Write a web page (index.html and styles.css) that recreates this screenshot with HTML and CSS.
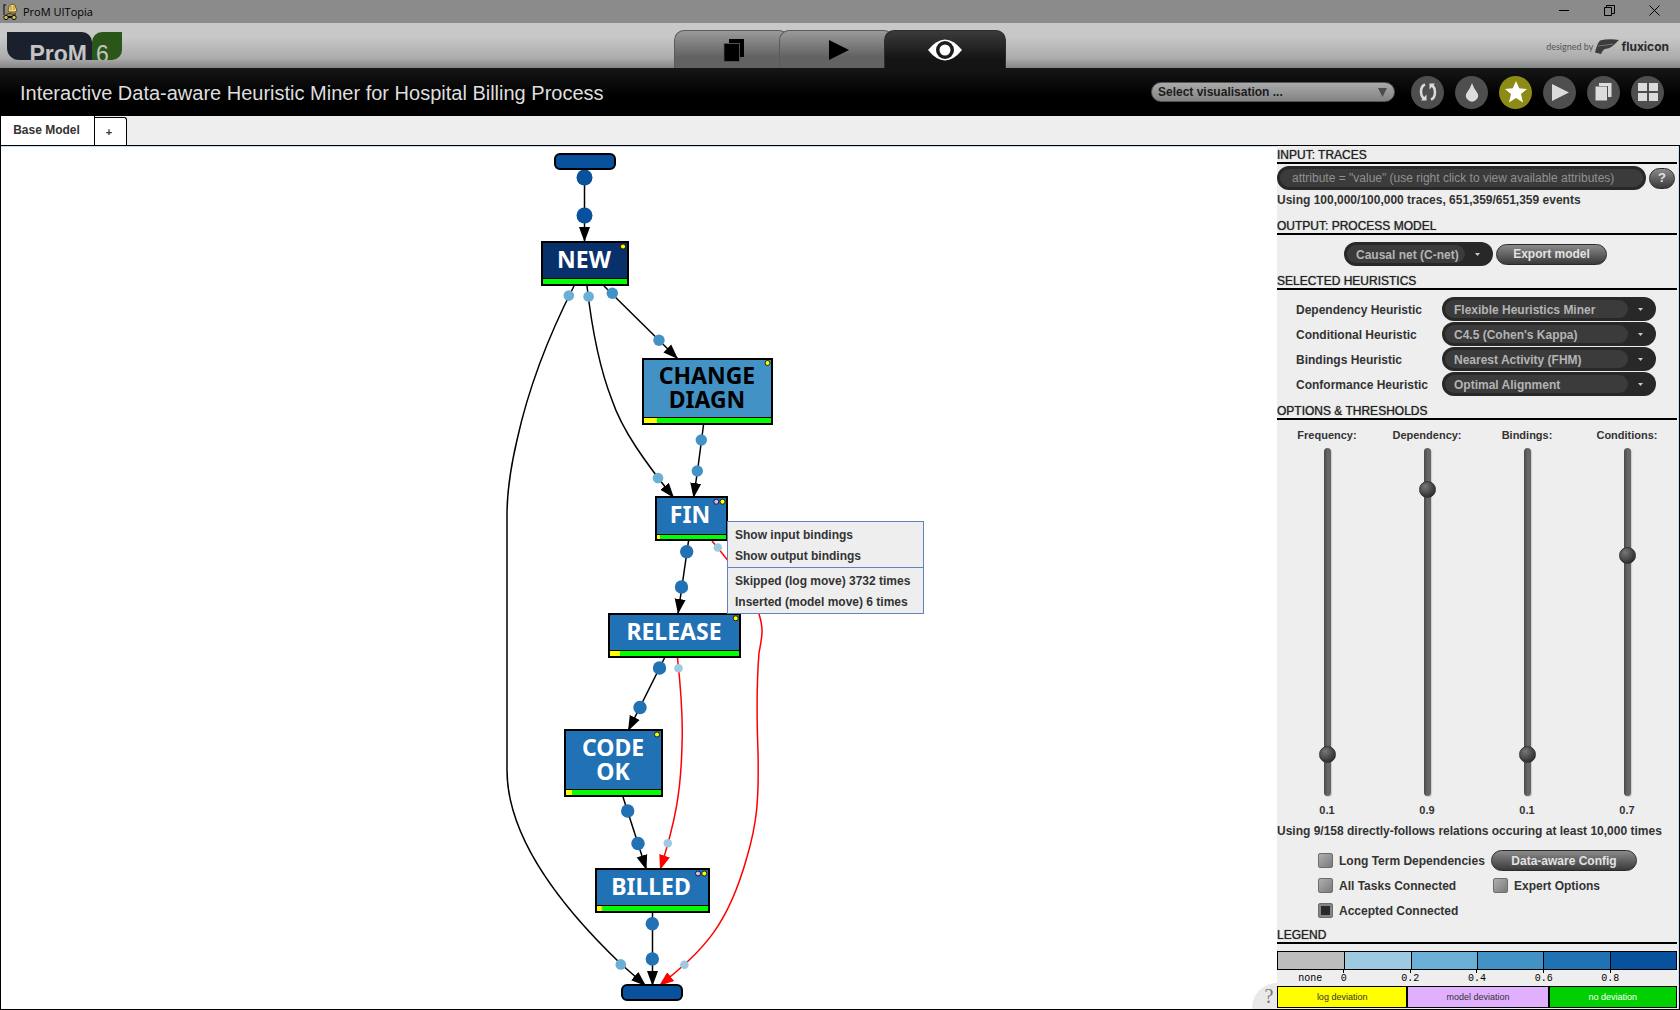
FILE: index.html
```html
<!DOCTYPE html>
<html lang="en">
<head>
<meta charset="utf-8">
<title>ProM UITopia</title>
<link rel="stylesheet" href="styles.css">
</head>
<body>
<div class="window">
  <header class="titlebar">
    <svg class="app-icon" width="16" height="18" viewBox="0 0 16 18" aria-hidden="true">
      <path d="M2 1v11M2 2h2M4 11h10" stroke="#3a3320" stroke-width="1.500" fill="none"/>
      <path d="M6 8l1-5 3-2 3 1 2 6-2 1H8z" fill="#f2d777" stroke="#6b5a20"/>
      <path d="M9 3v4M12 3v4M3 9l4 3 6-2" stroke="#a8842a" fill="none"/>
      <circle cx="4" cy="14.500" r="2.200" fill="#c9bf4c" stroke="#111"/>
      <circle cx="12" cy="14.500" r="2.200" fill="#c9bf4c" stroke="#111"/>
      <path d="M6 14h4" stroke="#111" stroke-width="2"/>
    </svg>
    <span class="app-name">ProM UITopia</span>
    <div class="window-controls">
      <button type="button" aria-label="Minimize"><svg width="11" height="11" viewBox="0 0 11 11"><path d="M0 5.500h10" stroke="#000"/></svg></button>
      <button type="button" aria-label="Restore"><svg width="11" height="11" viewBox="0 0 11 11"><path d="M.5 2.500h7v8h-7zM2.500 2.500v-2h8v8h-3" fill="none" stroke="#000"/></svg></button>
      <button type="button" aria-label="Close"><svg width="11" height="11" viewBox="0 0 11 11"><path d="M.5.5l10 10M10.500.5l-10 10" stroke="#000"/></svg></button>
    </div>
  </header>

  <nav class="toolbar">
    <div class="logo"><span class="logo-name">ProM</span><span class="logo-version">6</span></div>
    <div class="views">
      <button type="button" class="view" aria-label="Workspace">
        <svg width="22" height="24" viewBox="0 0 22 24"><path d="M6 1h15v18h-4V5H6z" fill="#000"/><path d="M1 5.500h15.500V23.500H1z" fill="#000" stroke="#555" stroke-width=".8"/></svg>
      </button>
      <button type="button" class="view" aria-label="Actions">
        <svg width="20" height="20" viewBox="0 0 20 20"><path d="M0 0l20 10L0 20z" fill="#000"/></svg>
      </button>
      <button type="button" class="view view-active" aria-label="Views">
        <svg width="34" height="22" viewBox="0 0 34 22"><path d="M0 11Q17-10 34 11Q17 32 0 11z" fill="#fff"/><circle cx="17" cy="11" r="9" fill="#1c1c1c"/><circle cx="17" cy="11" r="5.500" fill="#fff"/></svg>
      </button>
    </div>
    <div class="credit">
      <span class="credit-by">designed by</span>
      <svg width="24" height="16" viewBox="0 0 24 16" aria-hidden="true"><path d="M5 1.500Q14-.5 24 1Q20 5 17 7.500Q14 9.500 10 10Q8 10.500 6 15L0 13.500Q2 5 5 1.500z" fill="#3c3c3c"/><path d="M3 7Q12 6 18 5" stroke="#777" fill="none"/></svg>
      <span class="credit-name">fluxicon</span>
    </div>
  </nav>

  <div class="view-head">
    <h1>Interactive Data-aware Heuristic Miner for Hospital Billing Process</h1>
    <span class="vis-picker">
      <select aria-label="Select visualisation"><option>Select visualisation ...</option></select>
      <svg width="9" height="9" viewBox="0 0 9 9" aria-hidden="true"><path d="M0 0h9L4.500 9z" fill="#4c4c4c"/></svg>
    </span>
    <div class="actions">
      <button type="button" aria-label="Refresh"><svg width="18" height="20" viewBox="0 0 18 20"><path d="M6 2.500Q2 4 2 10q0 4 2.500 6.500M12 17.500Q16 16 16 10q0-4-2.500-6.500" fill="none" stroke="#dcdcdc" stroke-width="2.500"/><path d="M2 18.500h5.500v-6zM16 1.500h-5.500v6z" fill="#dcdcdc"/></svg></button>
      <button type="button" aria-label="Filter"><svg width="14" height="20" viewBox="0 0 14 20"><path d="M7 1Q8.500 6 12 10.500A6 5.800 0 1 1 2 10.500Q5.500 6 7 1z" fill="#dcdcdc"/></svg></button>
      <button type="button" class="favourite" aria-label="Favourite"><svg width="22" height="22" viewBox="0 0 22 22"><path d="M11 0l3.200 7.300 7.800.7-6 5 2 8.500-7-4.500-7 4.500 2-8.500-6-5 7.800-.7z" fill="#fff"/></svg></button>
      <button type="button" aria-label="Run"><svg width="18" height="17" viewBox="0 0 18 17"><path d="M1 0l17 8.500L1 17z" fill="#dcdcdc"/></svg></button>
      <button type="button" aria-label="Copy"><svg width="17" height="20" viewBox="0 0 17 20"><path d="M4 1h12.500v14H13V4H4z" fill="#dcdcdc"/><path d="M.5 4.500H12v14H.5z" fill="#dcdcdc"/></svg></button>
      <button type="button" aria-label="Overview"><svg width="20" height="20" viewBox="0 0 20 20"><path d="M0 1h9v8H0zM11 1h9v8h-9zM0 11h9v8H0zM11 11h9v8h-9z" fill="#dcdcdc"/></svg></button>
    </div>
  </div>

  <div class="tabs" role="tablist">
    <button type="button" role="tab" class="tab tab-active" aria-selected="true">Base Model</button>
    <button type="button" role="tab" class="tab tab-add" aria-selected="false">+</button>
  </div>

  <main class="workspace">
    <section class="canvas">
      <div class="diagram">
        <svg class="net" width="278" height="860" viewBox="500 147 278 860" role="img" aria-label="Causal net">
          <defs>
            <marker id="arrow" markerUnits="userSpaceOnUse" markerWidth="15" markerHeight="12" refX="15" refY="6" orient="auto"><path d="M0 0.500l15 5.500-15 5.500z" fill="#000"/></marker>
            <marker id="arrow-red" markerUnits="userSpaceOnUse" markerWidth="15" markerHeight="12" refX="15" refY="6" orient="auto"><path d="M0 0.500l15 5.500-15 5.500z" fill="#f00"/></marker>
          </defs>
          <g class="edge">
            <path d="M584.500 169V242"/>
            <path d="M604 286L678 359"/>
            <path d="M587 286C592 330 601 372 612 400C622 430 645 462 674 498"/>
            <path d="M574 286C549 335 528 390 517 440C510 470 507 490 507 515V770C507 845 575 920 621 964L646 986"/>
            <path d="M703.500 425L697.500 471L693.500 498"/>
            <path d="M688.500 541L678 614"/>
            <path d="M664.500 658L628 731"/>
            <path d="M623 797L646.500 870"/>
            <path d="M652.500 913V986"/>
          </g>
          <g class="edge edge-red">
            <path d="M712 541C735 568 756 598 759 614C764 630 762 636 759 653C756 690 757 725 758 752C759 800 757 823 747 857C728 925 705 949 659 986"/>
            <path d="M677.500 658C681 690 683 720 682 745C681 790 676 820 660 870"/>
          </g>
          <g fill="#08519c"><circle cx="584.500" cy="177.500" r="8"/><circle cx="584.500" cy="215.500" r="8"/></g>
          <g fill="#2171b5">
            <circle cx="686.700" cy="551.700" r="6.700"/><circle cx="681.500" cy="587" r="6.700"/>
            <circle cx="659.500" cy="668" r="6.700"/><circle cx="640" cy="707.500" r="6.700"/>
            <circle cx="627.700" cy="811" r="6.700"/><circle cx="638" cy="843.500" r="6.700"/>
            <circle cx="652.300" cy="923.700" r="6.700"/><circle cx="652.300" cy="959" r="6.700"/>
          </g>
          <g fill="#4292c6">
            <circle cx="612.300" cy="293.300" r="5.700"/><circle cx="659" cy="340.300" r="5.700"/>
            <circle cx="701.300" cy="440" r="5.700"/><circle cx="697.300" cy="471" r="5.700"/>
          </g>
          <g fill="#6baed6">
            <circle cx="568.800" cy="295.600" r="5.300"/><circle cx="588.600" cy="296.500" r="5.300"/>
            <circle cx="658" cy="478" r="5.300"/><circle cx="620.800" cy="964.400" r="5.300"/>
          </g>
          <g fill="#9ecae1">
            <circle cx="717.800" cy="547.500" r="4.300"/><circle cx="678.500" cy="668.200" r="4.300"/>
            <circle cx="667.800" cy="843.300" r="4.300"/><circle cx="684.400" cy="964.800" r="4.300"/>
          </g>

          <g class="terminal">
            <rect x="555" y="154" width="60" height="15" rx="5"/>
            <rect x="622" y="985" width="60" height="15" rx="5"/>
          </g>

          <g class="node">
            <rect class="body start" x="542" y="242" width="86" height="43"/>
            <path class="ok" d="M543 279h84v5h-84z"/><path class="rule" d="M541 278.500h88"/>
            <circle class="log" cx="623" cy="246.500" r="2.500"/>
            <text x="584" y="268">NEW</text>
          </g>
          <g class="node">
            <rect class="body mid" x="643" y="359" width="129" height="65"/>
            <path class="ok" d="M644 418h127v5H644z"/><path class="dev" d="M644 418h13v5h-13z"/><path class="rule" d="M642 417.500h131"/>
            <circle class="log" cx="767.500" cy="363" r="2.500"/>
            <text class="dark" x="707" y="384">CHANGE</text><text class="dark" x="707" y="408">DIAGN</text>
          </g>
          <g class="node">
            <rect class="body" x="656" y="497" width="71" height="43"/>
            <path class="ok" d="M657 535h69v4h-69z"/><path class="dev" d="M657 535h3v4h-3z"/><path class="rule" d="M655 534.500h73"/>
            <circle class="model" cx="716.300" cy="501.700" r="2.500"/><circle class="log" cx="722.500" cy="501.700" r="2.500"/>
            <text x="690" y="523">FIN</text>
          </g>
          <g class="node">
            <rect class="body" x="609" y="614" width="131" height="43"/>
            <path class="ok" d="M610 651h129v5H610z"/><path class="dev" d="M610 651h10v5h-10z"/><path class="rule" d="M608 650.500h133"/>
            <circle class="log" cx="735.700" cy="618.300" r="2.500"/>
            <text x="674" y="640">RELEASE</text>
          </g>
          <g class="node">
            <rect class="body" x="565" y="730" width="97" height="66"/>
            <path class="ok" d="M566 790h95v5h-95z"/><path class="dev" d="M566 790h6v5h-6z"/><path class="rule" d="M564 789.500h99"/>
            <circle class="log" cx="657" cy="734.500" r="2.500"/>
            <text x="613" y="756">CODE</text><text x="613" y="780">OK</text>
          </g>
          <g class="node">
            <rect class="body" x="596" y="869" width="113" height="43"/>
            <path class="ok" d="M597 906h111v5H597z"/><path class="dev" d="M597 906h5v5h-5z"/><path d="M601.500 906h1v5h-1z" fill="#a9a9a9"/><path class="rule" d="M595 905.500h115"/>
            <circle class="model" cx="698" cy="873.500" r="2.500"/><circle class="log" cx="704.300" cy="873.500" r="2.500"/>
            <text x="651" y="895">BILLED</text>
          </g>
        </svg>
        <div class="menu" role="menu">
          <button type="button" role="menuitem">Show input bindings</button>
          <button type="button" role="menuitem">Show output bindings</button>
          <hr>
          <button type="button" role="menuitem">Skipped (log move) 3732 times</button>
          <button type="button" role="menuitem">Inserted (model move) 6 times</button>
        </div>
      </div>
      <button type="button" class="help-corner" aria-label="Help">?</button>
    </section>

    <aside class="panel">
      <h2>INPUT: TRACES</h2>
      <div class="filter">
        <input type="text" aria-label="Trace filter" placeholder='attribute = "value" (use right click to view available attributes)'>
        <button type="button" class="pill pill-help" aria-label="Filter help">?</button>
      </div>
      <p class="stat">Using 100,000/100,000 traces, 651,359/651,359 events</p>

      <h2 class="spaced">OUTPUT: PROCESS MODEL</h2>
      <div class="output">
        <span class="combo combo-small"><select aria-label="Output model"><option>Causal net (C-net)</option></select><svg width="5" height="3" viewBox="0 0 5 3" aria-hidden="true"><path d="M0 0h5L2.500 3z" fill="#ccc"/></svg></span>
        <button type="button" class="pill pill-export">Export model</button>
      </div>

      <h2>SELECTED HEURISTICS</h2>
      <div class="heuristics">
        <label for="h-dep">Dependency Heuristic</label>
        <span class="combo"><select id="h-dep"><option>Flexible Heuristics Miner</option></select><svg width="5" height="3" viewBox="0 0 5 3" aria-hidden="true"><path d="M0 0h5L2.500 3z" fill="#ccc"/></svg></span>
        <label for="h-con">Conditional Heuristic</label>
        <span class="combo"><select id="h-con"><option>C4.5 (Cohen's Kappa)</option></select><svg width="5" height="3" viewBox="0 0 5 3" aria-hidden="true"><path d="M0 0h5L2.500 3z" fill="#ccc"/></svg></span>
        <label for="h-bin">Bindings Heuristic</label>
        <span class="combo"><select id="h-bin"><option>Nearest Activity (FHM)</option></select><svg width="5" height="3" viewBox="0 0 5 3" aria-hidden="true"><path d="M0 0h5L2.500 3z" fill="#ccc"/></svg></span>
        <label for="h-cnf">Conformance Heuristic</label>
        <span class="combo"><select id="h-cnf"><option>Optimal Alignment</option></select><svg width="5" height="3" viewBox="0 0 5 3" aria-hidden="true"><path d="M0 0h5L2.500 3z" fill="#ccc"/></svg></span>
      </div>

      <h2>OPTIONS &amp; THRESHOLDS</h2>
      <div class="sliders">
        <div class="slider"><label for="s-fre">Frequency:</label><input id="s-fre" type="range" min="0" max="1" step="0.1" value="0.1"><output for="s-fre">0.1</output></div>
        <div class="slider"><label for="s-dep">Dependency:</label><input id="s-dep" type="range" min="0" max="1" step="0.1" value="0.9"><output for="s-dep">0.9</output></div>
        <div class="slider"><label for="s-bin">Bindings:</label><input id="s-bin" type="range" min="0" max="1" step="0.1" value="0.1"><output for="s-bin">0.1</output></div>
        <div class="slider"><label for="s-con">Conditions:</label><input id="s-con" type="range" min="0" max="1" step="0.1" value="0.7"><output for="s-con">0.7</output></div>
      </div>
      <p class="stat">Using 9/158 directly-follows relations occuring at least 10,000 times</p>
      <div class="options">
        <label class="check"><input type="checkbox">Long Term Dependencies</label>
        <button type="button" class="pill pill-config">Data-aware Config</button>
        <label class="check"><input type="checkbox">All Tasks Connected</label>
        <label class="check check-expert"><input type="checkbox">Expert Options</label>
        <label class="check"><input type="checkbox" checked>Accepted Connected</label>
      </div>

      <h2>LEGEND</h2>
      <div class="swatches"><span class="f-none"></span><span class="f-0"></span><span class="f-2"></span><span class="f-4"></span><span class="f-6"></span><span class="f-8"></span></div>
      <div class="ticks"><span class="t-none">none</span><span class="t-0">0</span><span class="t-2">0.2</span><span class="t-4">0.4</span><span class="t-6">0.6</span><span class="t-8">0.8</span></div>
      <div class="deviations"><span class="d-log">log deviation</span><span class="d-model">model deviation</span><span class="d-none">no deviation</span></div>
    </aside>
  </main>
</div>
</body>
</html>
```

FILE: styles.css
```css
* { box-sizing: border-box; }

body {
  margin: 0;
  font: bold 12px/16px "Liberation Sans", Arial, sans-serif;
  color: #333;
  background: #fff;
}

button, input, select {
  margin: 0;
  padding: 0;
  border: 0;
  font: inherit;
  color: inherit;
  background: none;
}

svg { display: block; }

.window { display: flex; flex-direction: column; min-height: 100vh; }

/* Title bar */
.titlebar {
  display: flex;
  align-items: center;
  height: 23px;
  padding: 0 20px 0 2px;
  background: #8b8b8b;
}
.app-name { margin-left: 5px; padding-top: 1px; font: 11px/16px "Open Sans", sans-serif; color: #000; }
.window-controls { display: flex; gap: 34px; margin-left: auto; }
.window-controls button { padding: 1px 0 4px; }

/* Main toolbar */
.toolbar {
  display: grid;
  grid-template-columns: 1fr auto 1fr;
  height: 45px;
  background: linear-gradient(#c8c8c8 0, #c8c8c8 30%, #acacac 78%, #868686);
}
.logo {
  display: flex;
  width: 115px;
  height: 28px;
  margin: 9px 0 0 7px;
  overflow: hidden;
  color: #c4c4c4;
}
.logo-name {
  width: 85px;
  padding: 10px 5px 0 0;
  border-radius: 0 10px 0 12px;
  background: #1b212c;
  font-size: 23px;
  line-height: 24px;
  text-align: right;
}
.logo-version {
  width: 30px;
  padding-top: 10px;
  padding-left: 4px;
  border-radius: 10px 0 10px 0;
  background: #2b561a;
  font-size: 23px;
  font-weight: normal;
  line-height: 24px;
}
.views { display: flex; height: 38px; margin-top: 7px; }
.view {
  display: flex;
  justify-content: center;
  align-items: center;
  width: 115px;
  margin-right: -10px;
  padding-left: 5px;
  border: 1px solid #5a5a5a;
  border-bottom: 0;
  border-radius: 10px 10px 0 0;
  background: linear-gradient(#9a9a9a, #626262 70%);
}
.view-active {
  width: 122px;
  margin-right: 0;
  padding-left: 0;
  border-color: #2c2c2c;
  background: linear-gradient(#3b3b3b, #141414 75%);
}
.credit {
  display: flex;
  align-items: center;
  justify-content: flex-end;
  gap: 2px;
  padding: 3px 11px 0 0;
}
.credit-by { font: 9px/16px Lato, sans-serif; color: #555; }
.credit-name { font: bold 12px/16px Inter, sans-serif; color: #2a2a2a; }

/* View header */
.view-head {
  display: flex;
  align-items: center;
  height: 48px;
  padding: 0 16px 0 20px;
  background: linear-gradient(#161616, #000 60%);
}
h1 {
  margin: 0 auto 0 0;
  padding-top: 2px;
  font: 20px/24px "Liberation Sans", Arial, sans-serif;
  color: #dedede;
}
.vis-picker {
  display: flex;
  align-items: center;
  width: 244px;
  height: 20px;
  padding-right: 7px;
  border: 1px solid #555;
  border-radius: 10px;
  background: linear-gradient(#aaa, #838383);
  color: #1c1c1c;
}
.vis-picker select {
  flex: 1;
  height: 18px;
  padding-left: 6px;
  appearance: none;
}
.actions { display: flex; gap: 11px; margin-left: 16px; }
.actions button {
  display: flex;
  align-items: center;
  justify-content: center;
  width: 33px;
  height: 33px;
  border-radius: 50%;
  background: #4e4e4e;
}
.actions .favourite { background: #8b8b15; }

/* Tabs */
.tabs { display: flex; align-items: flex-end; height: 29px; background: #eee; }
.tab { border: 1px solid #000; border-bottom: 0; background: #fff; }
.tab-active { width: 95px; height: 29px; padding: 0 2px 1px 0; border-width: 0 1px; }
.tab-add { width: 32px; height: 28px; padding: 0 3px 0 0; border-left: 0; border-radius: 0 3px 0 0; font-size: 11px; }

/* Workspace */
.workspace {
  display: flex;
  flex: 1;
  border: 1px solid #000;
}
.canvas {
  position: relative;
  display: flex;
  flex: 1;
  justify-content: center;
  border-top: 1px solid #c8ddf2;
  background: #fff;
}
.diagram { position: relative; width: 278px; }

.edge { fill: none; stroke: #000; stroke-width: 1.500; }
.edge path { marker-end: url(#arrow); }
.edge-red { stroke: #f00; }
.edge-red path { marker-end: url(#arrow-red); }
.terminal { fill: #08519c; stroke: #000; stroke-width: 2; }
.body { fill: #2171b5; stroke: #000; stroke-width: 2; }
.start { fill: #08306b; }
.mid { fill: #4292c6; }
.ok { fill: #0f0; }
.dev { fill: #ff0; }
.rule { stroke: #000; stroke-width: 1; }
.log { fill: #ff0; stroke: #000; stroke-width: .8; }
.model { fill: #e0b0ff; stroke: #000; stroke-width: .8; }
.net text {
  fill: #fff;
  font: bold 23px "Noto Sans", "Open Sans", sans-serif;
  text-anchor: middle;
}
.net .dark { fill: #000; }

.menu {
  position: absolute;
  left: 227px;
  top: 374px;
  width: 197px;
  padding: 3px 0 0;
  border: 1px solid #6382bf;
  background: #eee;
}
.menu button {
  display: block;
  width: 100%;
  padding: 2px 7px 3px;
  text-align: left;
  white-space: nowrap;
}
.menu hr { margin: 0 0 3px; border: 0; border-top: 1px solid #6382bf; }

.help-corner {
  position: absolute;
  right: 0;
  bottom: 0;
  width: 25px;
  height: 26px;
  padding-left: 9px;
  border-radius: 25px 0 0 0;
  background: #e9e9e9;
  font: 20px/24px "Liberation Serif", serif;
  color: #777;
}

/* Control panel */
.panel {
  flex: 0 0 402px;
  padding-right: 1px;
  padding-top: 1px;
  border-right: 1px solid #c8ddf2;
  background: #eee;
}
h2 {
  margin: 7px 0 0;
  padding-top: 2px;
  border-bottom: 2px solid #000;
  font: 12px/13px "Liberation Sans", Arial, sans-serif;
  color: #222;
  text-shadow: 0 0 1px #555;
}
h2:first-child { margin-top: 0; }
h2.spaced { margin-top: 10px; }
.filter { display: flex; align-items: center; gap: 3px; margin-top: 2px; }
.filter input {
  flex: 1;
  height: 24px;
  padding: 0 12px;
  border: 3px solid #282828;
  border-radius: 12px;
  background: #3b3b3b;
  font-weight: normal;
  color: #ccc;
}
.filter input::placeholder { color: #919191; }
.stat { margin: 2px 0 0; white-space: nowrap; }

.pill {
  height: 21px;
  border: 1px solid #2a2a2a;
  border-radius: 11px;
  background: linear-gradient(#8a8a8a, #3a3a3a);
  color: #e2e2e2;
}
.pill-help { width: 26px; margin-right: 2px; font-size: 13px; }
.pill-export { width: 111px; }
.pill-config { width: 146px; }

.output { display: flex; align-items: center; justify-content: center; gap: 3px; height: 24px; margin: 7px 3px 0 0; }
.combo {
  display: flex;
  align-items: center;
  width: 214px;
  height: 24px;
  padding: 3px 13px 3px 3px;
  border-radius: 12px;
  background: #282828;
  color: #b4b4b4;
}
.combo-small { width: 149px; }
.combo select {
  flex: 1;
  height: 18px;
  margin-right: 10px;
  padding: 1px 0 0 9px;
  border-radius: 9px;
  appearance: none;
  background: #3b3b3b;
}
.heuristics {
  display: grid;
  grid-template-columns: 146px 214px;
  gap: 1px 0;
  align-items: center;
  margin: 7px 0 0 19px;
}
.heuristics label { padding-top: 2px; }

.sliders { display: grid; grid-template-columns: repeat(4, 1fr); margin: 7px 0 5px; }
.slider { display: flex; flex-direction: column; align-items: center; font-size: 11px; }
.slider input {
  width: 7px;
  height: 348px;
  margin: 5px 0 6px;
  border-radius: 4px;
  appearance: none;
  writing-mode: vertical-lr;
  direction: rtl;
  background: linear-gradient(90deg, #484848, #666 50%);
  box-shadow: 1px 1px 1px #ccc;
}
.slider input::-webkit-slider-thumb {
  width: 17px;
  height: 17px;
  margin-left: -5px;
  margin-right: -5px;
  border: 1px solid #333;
  border-radius: 50%;
  appearance: none;
  background: radial-gradient(circle at 35% 30%, #777, #222 90%);
}

.options {
  display: grid;
  grid-template-columns: 173px auto;
  grid-auto-rows: 21px;
  gap: 4px 0;
  justify-content: start;
  align-items: center;
  margin: 11px 0 6px 41px;
}
.check { display: flex; align-items: center; gap: 6px; white-space: nowrap; }
.check-expert { padding-left: 2px; }
.check input {
  width: 15px;
  height: 15px;
  border: 1px solid #6d6d6d;
  border-radius: 2px;
  appearance: none;
  background: linear-gradient(135deg, #b0b0b0, #7a7a7a);
}
.check input:checked {
  background: linear-gradient(#2a2a2a, #2a2a2a) center / 9px 9px no-repeat, #858585;
}
.options + h2 { margin-top: 0; }

.swatches { display: grid; grid-template-columns: repeat(6, 1fr); height: 19px; margin-top: 7px; border: 1px solid #000; }
.swatches span + span { border-left: 1px solid #000; }
.f-none { background: #bdbdbd; }
.f-0 { background: #9ecae1; }
.f-2 { background: #6baed6; }
.f-4 { background: #4292c6; }
.f-6 { background: #2171b5; }
.f-8 { background: #08519c; }
.ticks {
  display: grid;
  grid-template-columns: repeat(12, 1fr);
  height: 14px;
  font: 10px/11px "Liberation Mono", monospace;
  color: #000;
}
.ticks span { display: flex; flex-direction: column; align-items: center; grid-row: 1; }
.ticks span::before { content: ""; width: 1px; height: 3px; background: #000; }
.ticks .t-none { grid-column: 1 / 3; }
.ticks .t-none::before { background: none; }
.t-0 { grid-column: 2 / 4; }
.t-2 { grid-column: 4 / 6; }
.t-4 { grid-column: 6 / 8; }
.t-6 { grid-column: 8 / 10; }
.t-8 { grid-column: 10 / 12; }
.deviations {
  display: grid;
  grid-template-columns: 130fr 141fr 128fr;
  height: 22px;
  margin-top: 2px;
  font: 9px/20px "Liberation Sans", Arial, sans-serif;
  text-align: center;
}
.deviations span { border: 1px solid #000; }
.d-log { background: #ff0; }
.d-model { background: #e0b0ff; }
.d-none { background: #00d000; color: #fff; }
```
